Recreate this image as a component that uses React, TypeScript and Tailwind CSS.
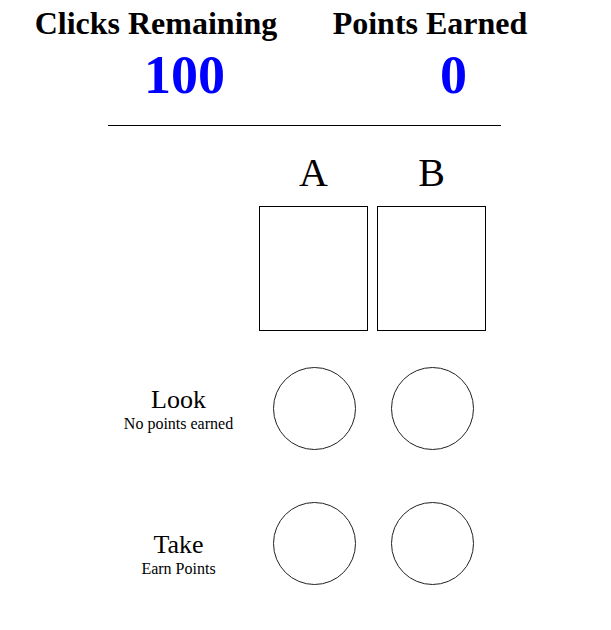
import React from "react";

const serif = { fontFamily: '"Liberation Serif", "Times New Roman", serif' };

function Circle() {
  return <div className="w-[83px] h-[83px] rounded-full border border-[#222] bg-white" />;
}

function ActionRow({ title, sub, rowClass, labelPad }: { title: string; sub: string; rowClass: string; labelPad: string }) {
  return (
    <div className={`flex items-start ml-[103px] ${rowClass}`}>
      <div className={`w-[151px] text-center text-black ${labelPad}`}>
        <div className="text-[26px] leading-[26px]">{title}</div>
        <div className="text-[16px] leading-[22px]">{sub}</div>
      </div>
      <div className="flex gap-[35px] ml-[19px]">
        <Circle />
        <Circle />
      </div>
    </div>
  );
}

export default function App() {
  return (
    <div className="w-[611px] h-[630px] bg-white text-black overflow-hidden" style={serif}>
      <div className="flex ml-[19px] pt-[7px]">
        <div className="w-[274px] text-center font-bold text-[32px] leading-[32px]">Clicks Remaining</div>
        <div className="w-[274px] text-center font-bold text-[32px] leading-[32px]">Points Earned</div>
      </div>
      <div className="flex ml-[50px] mt-[9px]">
        <div className="w-[269px] text-center font-bold text-[54px] leading-[54px] text-[#0000ff]">100</div>
        <div className="w-[269px] text-center font-bold text-[54px] leading-[54px] text-[#0000ff]">0</div>
      </div>
      <div className="ml-[108px] mt-[23px] w-[393px] h-px bg-black" />

      <div className="flex gap-[9px] ml-[259px] mt-[27px]">
        <div className="w-[109px] text-center text-[40px] leading-[40px]">A</div>
        <div className="w-[109px] text-center text-[40px] leading-[40px]">B</div>
      </div>
      <div className="flex gap-[9px] ml-[259px] mt-[13px]">
        <div className="w-[109px] h-[125px] border border-black" />
        <div className="w-[109px] h-[125px] border border-black" />
      </div>

      <ActionRow title="Look" sub="No points earned" rowClass="mt-[36px]" labelPad="pt-[20px]" />
      <ActionRow title="Take" sub="Earn Points" rowClass="mt-[52px]" labelPad="pt-[30px]" />
    </div>
  );
}
